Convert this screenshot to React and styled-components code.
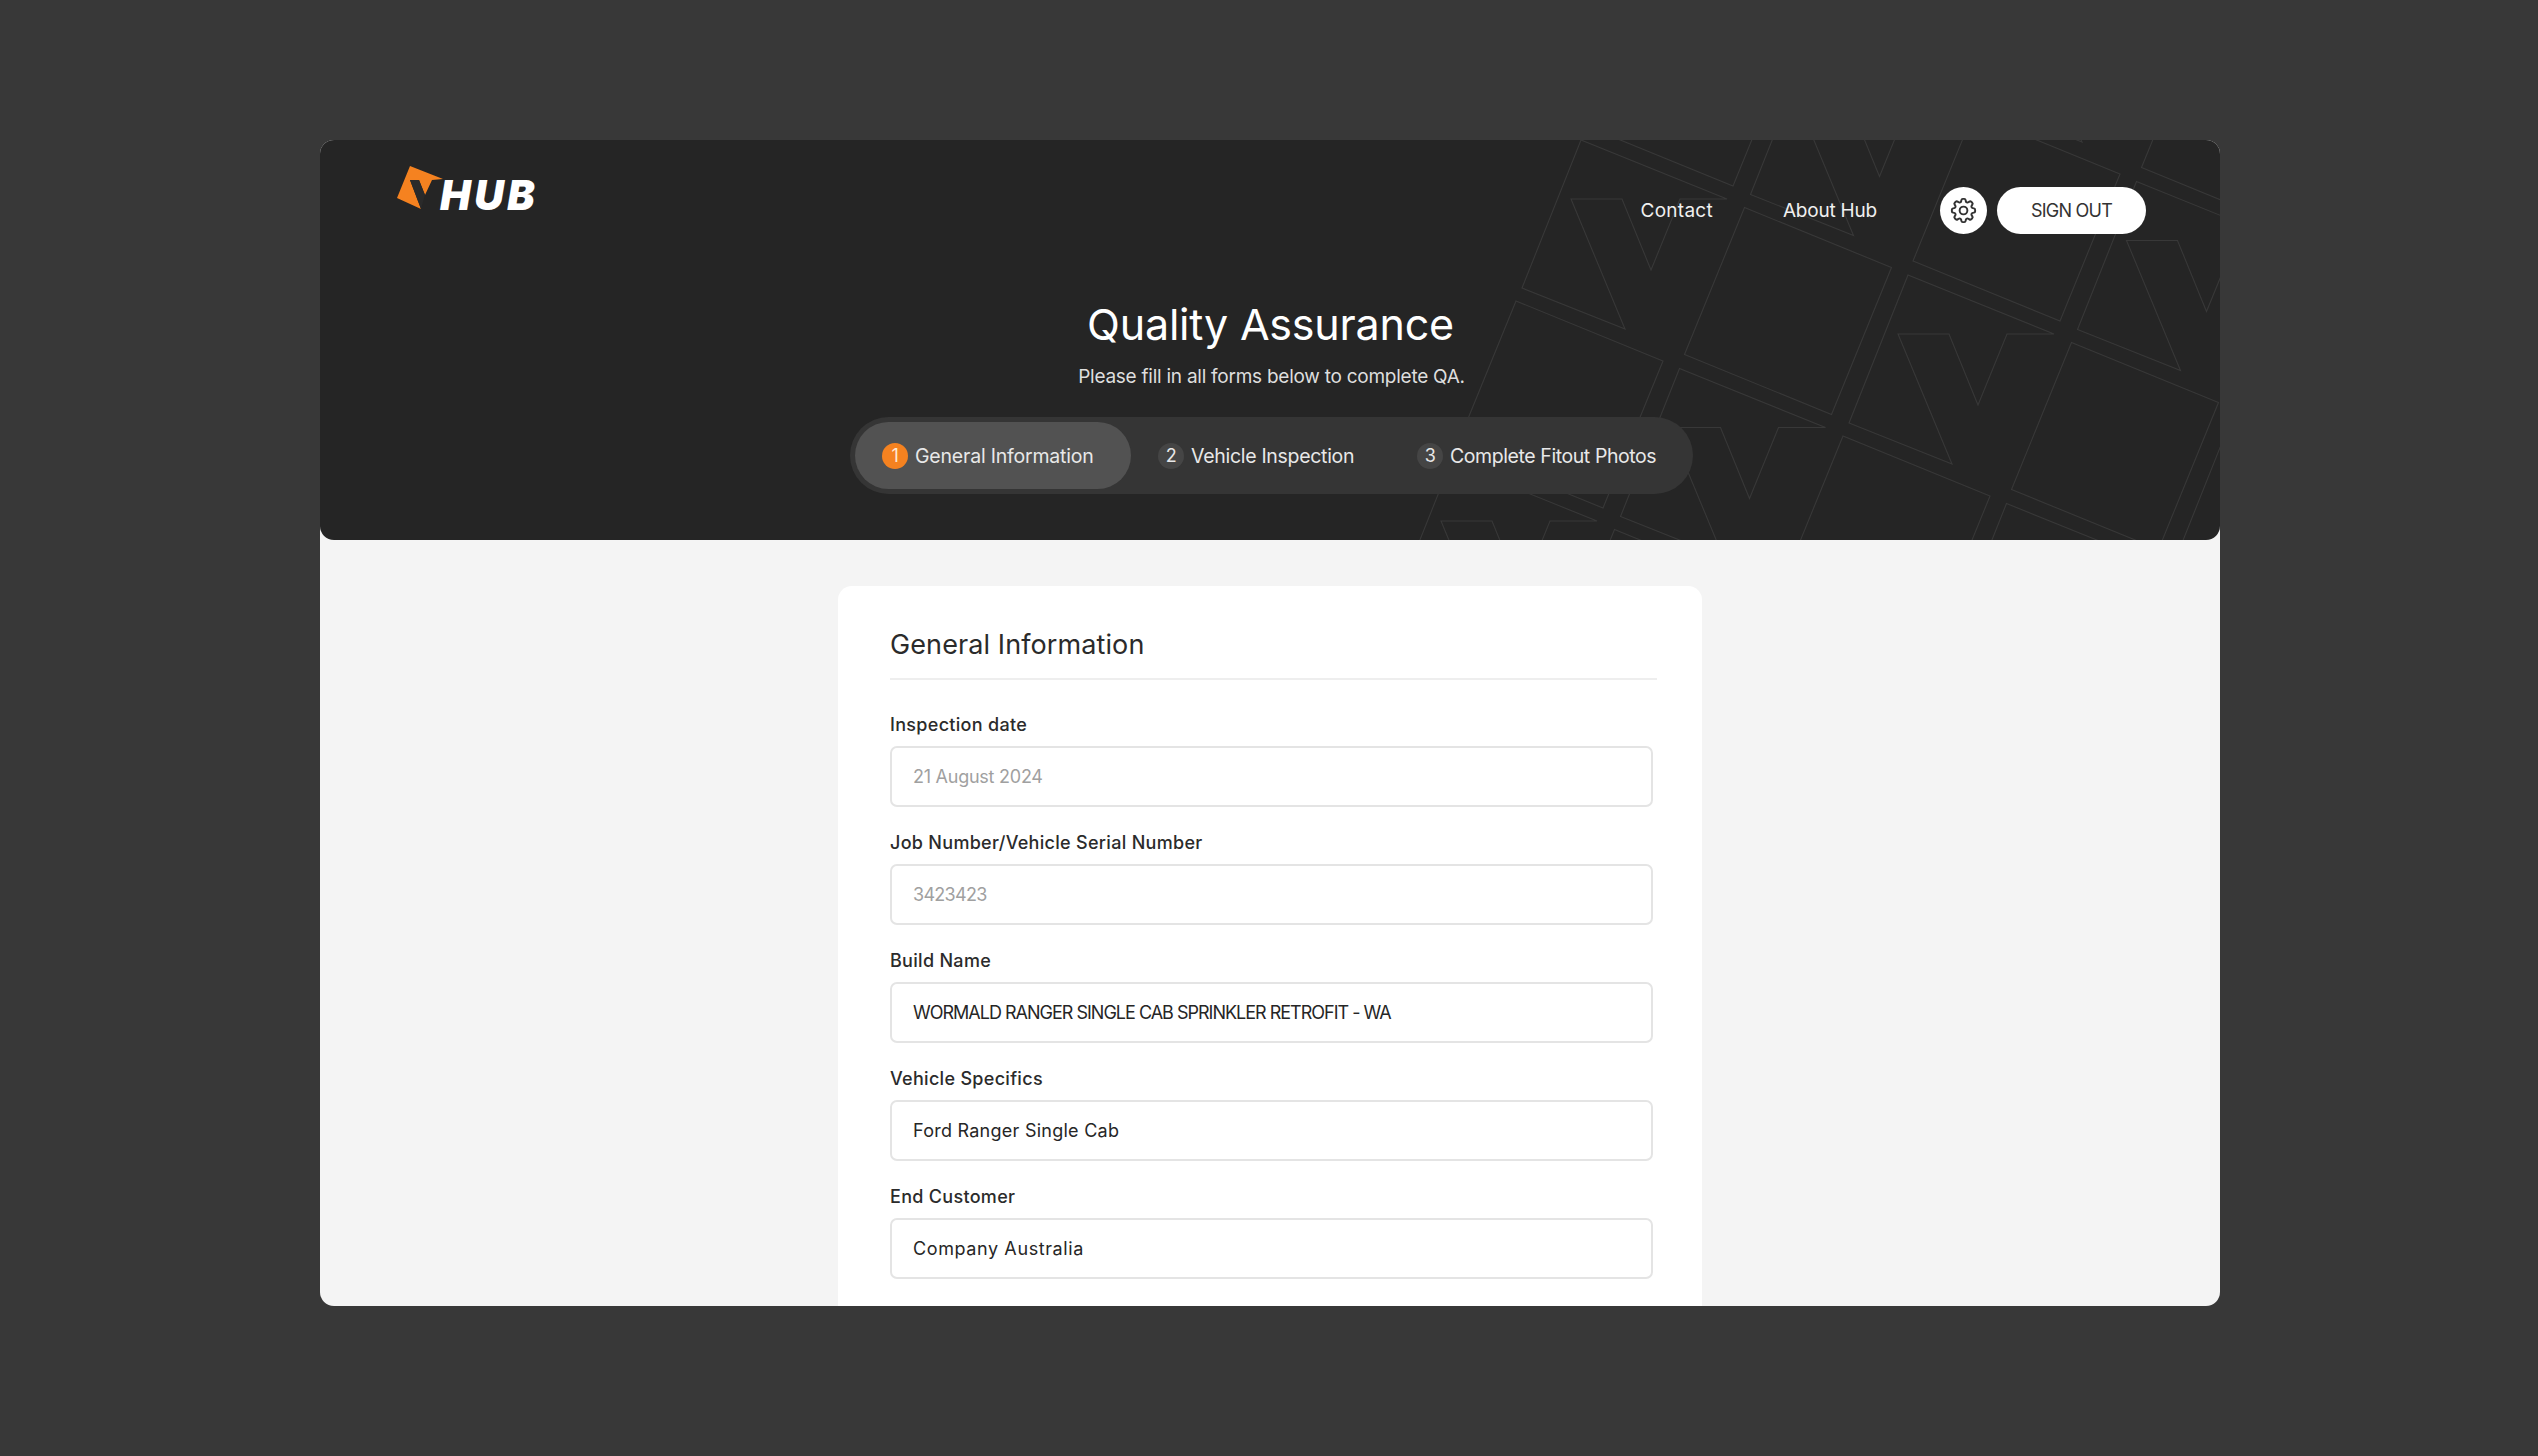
import React from "react";
import styled, { createGlobalStyle } from "styled-components";
import { HiOutlineCog8Tooth } from "react-icons/hi2";

const Global = createGlobalStyle`
  html, body { margin: 0; padding: 0; background: #383838; }
  * { box-sizing: border-box; }
  body { font-family: Inter, "Noto Sans", "Liberation Sans", sans-serif; }
`;

const Page = styled.div`
  width: 2538px;
  height: 1456px;
  padding: 140px 318px 150px 320px;
  background: #383838;
  overflow: hidden;
`;
const Frame = styled.div`
  width: 1900px;
  height: 1166px;
  border-radius: 14px;
  overflow: hidden;
  background: #f4f4f4;
  display: flex;
  flex-direction: column;
`;
const Header = styled.header`
  position: relative;
  flex: 0 0 400px;
  background: #252525;
  border-radius: 0 0 14px 14px;
  overflow: hidden;
  padding: 26px 74px 0 77px;
  color: #fff;
`;
const Pattern = styled.svg`
  position: absolute;
  left: 0;
  top: 0;
  width: 1900px;
  height: 400px;
`;
const TopBar = styled.div`
  position: relative;
  display: flex;
  justify-content: space-between;
  align-items: flex-start;
  height: 68px;
`;
const Logo = styled.div`
  display: flex;
  align-items: flex-start;
`;
const LogoMark = styled.svg`
  width: 48px;
  height: 44px;
  flex: none;
`;
const LogoText = styled.span`
  font-size: 41px;
  font-weight: 900;
  font-style: italic;
  line-height: 44px;
  margin: 7px 0 0 -5px;
  letter-spacing: 3.4px;
  color: #fff;
`;
const Nav = styled.nav`
  display: flex;
  align-items: center;
  margin-top: 21px;
`;
const NavLink = styled.a`
  font-size: 19px;
  color: #f0f0f0;
  letter-spacing: ${(p) => p.$ls}px;
  margin-right: ${(p) => p.$gap}px;
`;
const GearButton = styled.button`
  width: 47px;
  height: 47px;
  border-radius: 50%;
  border: 0;
  padding: 0;
  background: #fff;
  color: #333;
  display: flex;
  align-items: center;
  justify-content: center;
  margin-right: 10px;
`;
const SignOut = styled.button`
  width: 149px;
  height: 47px;
  border-radius: 24px;
  border: 0;
  background: #fff;
  color: #333;
  font-family: inherit;
  font-size: 18px;
  letter-spacing: -0.75px;
`;
const Hero = styled.div`
  position: relative;
  display: flex;
  flex-direction: column;
  align-items: center;
`;
const Title = styled.h1`
  margin: 60px 2px 0 0;
  font-size: 43px;
  font-weight: 400;
  line-height: 60px;
  letter-spacing: -0.2px;
  color: #fff;
`;
const Subtitle = styled.p`
  margin: 10px 0 0;
  font-size: 19px;
  line-height: 26px;
  color: #dedede;
  letter-spacing: -0.25px;
`;
const Steps = styled.div`
  display: flex;
  align-items: center;
  margin-top: 27px;
  width: 843px;
  height: 77px;
  border-radius: 39px;
  background: #353535;
  padding: 0 5px;
`;
const Step = styled.div`
  display: flex;
  align-items: center;
  gap: 7px;
  height: 67px;
  width: ${(p) => p.$w}px;
  padding-left: ${(p) => p.$pad}px;
  border-radius: 34px;
  background: ${(p) => (p.$active ? "#525252" : "transparent")};
  font-size: 19.5px;
  letter-spacing: ${(p) => p.$ls}px;
  color: #e8e8e8;
`;
const Badge = styled.span`
  width: 26px;
  height: 26px;
  border-radius: 50%;
  flex: none;
  display: flex;
  align-items: center;
  justify-content: center;
  font-size: 18px;
  color: ${(p) => (p.$active ? "#ffe9d6" : "#e8e8e8")};
  background: ${(p) => (p.$active ? "#f58220" : "#454545")};
`;
const Body = styled.main`
  flex: 1;
  min-height: 0;
  display: flex;
  justify-content: center;
  padding-top: 46px;
`;
const Card = styled.section`
  width: 864px;
  height: 900px;
  flex: none;
  background: #fff;
  border-radius: 14px 14px 0 0;
  padding: 0 45px 0 52px;
`;
const CardTitle = styled.h2`
  margin: 0;
  height: 94px;
  padding-top: 39px;
  font-size: 27px;
  font-weight: 400;
  line-height: 40px;
  letter-spacing: 0.1px;
  color: #2b2b2b;
  border-bottom: 2px solid #eeeeee;
`;
const Fields = styled.div`
  display: flex;
  flex-direction: column;
  gap: 24px;
  padding-top: 33px;
  width: 763px;
`;
const Field = styled.label`
  display: flex;
  flex-direction: column;
  gap: 9px;
`;
const LabelText = styled.span`
  font-size: 18px;
  font-weight: 500;
  line-height: 24px;
  letter-spacing: 0.3px;
  color: #2b2b2b;
`;
const Input = styled.div`
  height: 61px;
  border: 2px solid #e4e4e4;
  border-radius: 7px;
  padding: 0 21px;
  display: flex;
  align-items: center;
  font-size: 18px;
  letter-spacing: ${(p) => p.$ls}px;
  color: ${(p) => (p.$muted ? "#a0a0a0" : "#262626")};
  background: #fff;
`;

const OX = 320;
const OY = 140;
const A = [163.5, 67.5];
const B = [-65, 161];
const SQ = [[0, 0], [147, 60], [87, 207], [-60, 147]];
const VS = [[0, 0], [146, 59], [99, 59], [70, 130], [41, 59], [-10, 59], [44, 189], [-59, 148]];

function tilePaths() {
  const out = [];
  for (let i = -2; i <= 4; i++) {
    for (let j = -3; j <= 4; j++) {
      const x = 1908 + i * A[0] + j * B[0] - OX;
      const y = 275 + i * A[1] + j * B[1] - OY;
      const even = ((i + j) % 2 + 2) % 2 === 0;
      const pts = even ? VS : SQ;
      const d = "M" + pts.map((p) => `${(x + p[0]).toFixed(1)} ${(y + p[1]).toFixed(1)}`).join("L") + "Z";
      out.push(d);
    }
  }
  return out;
}

const fields = [
  ["Inspection date", "21 August 2024", true, -0.25],
  ["Job Number/Vehicle Serial Number", "3423423", true, -0.7],
  ["Build Name", "WORMALD RANGER SINGLE CAB SPRINKLER RETROFIT - WA", false, -1],
  ["Vehicle Specifics", "Ford Ranger Single Cab", false, 0.25],
  ["End Customer", "Company Australia", false, 0.6],
];

export default function App() {
  return (
    <Page>
      <Global />
      <Frame>
        <Header>
          <Pattern viewBox="0 0 1900 400" fill="none" stroke="#383838" strokeWidth="1.1">
            {tilePaths().map((d, k) => (
              <path key={k} d={d} />
            ))}
          </Pattern>
          <TopBar>
            <Logo>
              <LogoMark viewBox="0 0 48 44">
                <path d="M13 0 L46 13 L35 14 L28 29 L22 14 L13 14 L24 43 L0 32 Z" fill="#f58220" />
                <path d="M13 14 L22 14 L28 29 L24 43 Z" fill="#2a2a2a" />
              </LogoMark>
              <LogoText>HUB</LogoText>
            </Logo>
            <Nav>
              <NavLink $gap={70} $ls={0.25}>Contact</NavLink>
              <NavLink $gap={63} $ls={-0.2}>About Hub</NavLink>
              <GearButton aria-label="Settings">
                <HiOutlineCog8Tooth size={31} />
              </GearButton>
              <SignOut>SIGN OUT</SignOut>
            </Nav>
          </TopBar>
          <Hero>
            <Title>Quality Assurance</Title>
            <Subtitle>Please fill in all forms below to complete QA.</Subtitle>
            <Steps>
              <Step $active $w={276} $pad={27} $ls={-0.2}>
                <Badge $active>1</Badge>General Information
              </Step>
              <Step $w={259} $pad={27} $ls={-0.3}>
                <Badge>2</Badge>Vehicle Inspection
              </Step>
              <Step $w={290} $pad={27} $ls={-0.42}>
                <Badge>3</Badge>Complete Fitout Photos
              </Step>
            </Steps>
          </Hero>
        </Header>
        <Body>
          <Card>
            <CardTitle>General Information</CardTitle>
            <Fields>
              {fields.map(([label, value, muted, ls]) => (
                <Field key={label}>
                  <LabelText>{label}</LabelText>
                  <Input $muted={muted} $ls={ls}>{value}</Input>
                </Field>
              ))}
            </Fields>
          </Card>
        </Body>
      </Frame>
    </Page>
  );
}
